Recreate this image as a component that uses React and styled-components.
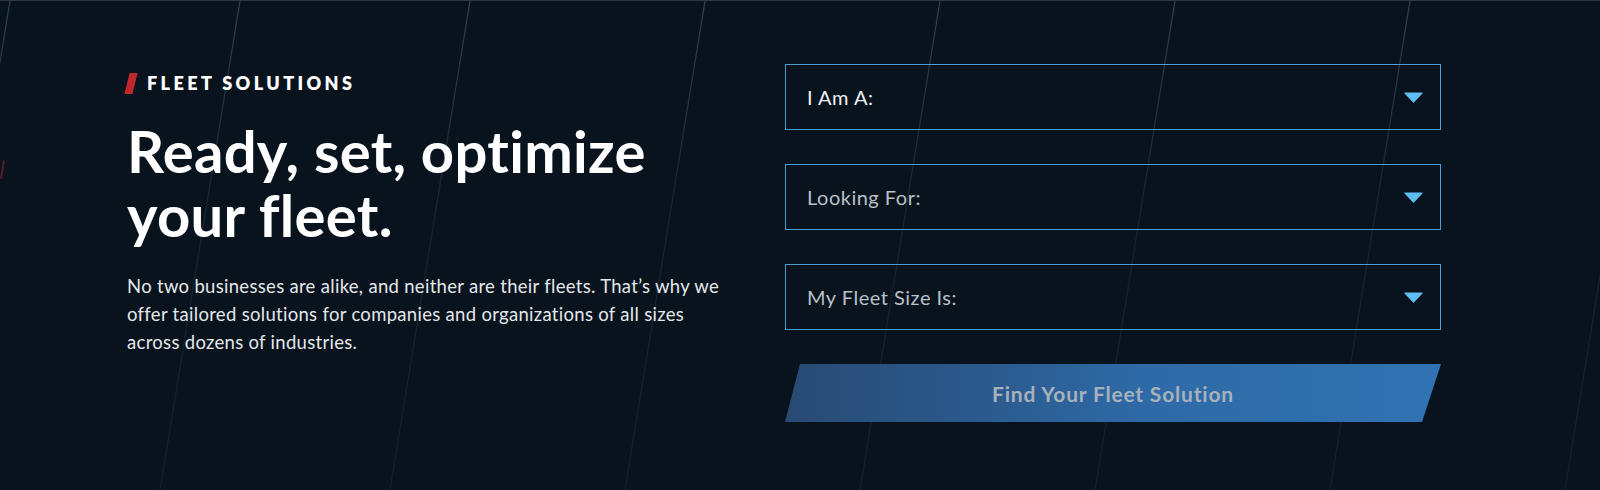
import React from "react";
import styled, { createGlobalStyle } from "styled-components";

const GlobalStyle = createGlobalStyle`
  html, body {
    margin: 0;
    padding: 0;
    background: #08131e;
  }
  body {
    font-family: "Lato", "Open Sans", sans-serif;
  }
`;

// faint slanted lines in the background
const LINES = [10, 240, 470, 705, 940, 1175, 1410, 1645];

const Backdrop = () => (
  <BackSvg viewBox="0 0 1600 490" preserveAspectRatio="none">
    <defs>
      <linearGradient id="ln" x1="0" y1="0" x2="0" y2="1">
        <stop offset="0" stopColor="#394a5a" stopOpacity="0.85" />
        <stop offset="0.45" stopColor="#2a3a4a" stopOpacity="0.45" />
        <stop offset="1" stopColor="#2a3a4a" stopOpacity="0.3" />
      </linearGradient>
    </defs>
    {LINES.map((x) => (
      <line key={x} x1={x} y1="0" x2={x - 80} y2="490" stroke="url(#ln)" strokeWidth="1.2" />
    ))}
    <line x1="4" y1="160" x2="1" y2="178" stroke="#7a2530" strokeWidth="2" opacity="0.7" />
  </BackSvg>
);

const Caret = () => (
  <svg width="19" height="11" viewBox="0 0 19 11">
    <path d="M1 1 H18 L9.5 10 Z" fill="#5ebef2" stroke="#5ebef2" strokeWidth="1.2" strokeLinejoin="round" />
  </svg>
);

const App = () => {
  return (
    <>
      <GlobalStyle />
      <Section>
        <Backdrop />
        <Inner>
          <Intro>
            <Eyebrow>
              <Slash />
              FLEET SOLUTIONS
            </Eyebrow>
            <Title>
              Ready, set, optimize
              <br />
              your fleet.
            </Title>
            <Lead>
              No two businesses are alike, and neither are their fleets. That’s why we offer tailored
              solutions for companies and organizations of all sizes across dozens of industries.
            </Lead>
          </Intro>
          <Form>
            <Select $active>
              I Am A:
              <Caret />
            </Select>
            <Select>
              Looking For:
              <Caret />
            </Select>
            <Select>
              My Fleet Size Is:
              <Caret />
            </Select>
            <Submit>Find Your Fleet Solution</Submit>
          </Form>
        </Inner>
      </Section>
    </>
  );
};

//Styles
const Section = styled.section`
  position: relative;
  height: 490px;
  box-sizing: border-box;
  border-top: 1px solid #2c3742;
  background: #08131e;
  overflow: hidden;
`;

const BackSvg = styled.svg`
  position: absolute;
  inset: 0;
  width: 100%;
  height: 100%;
  pointer-events: none;
`;

const Inner = styled.div`
  position: relative;
  display: grid;
  grid-template-columns: 600px 656px;
  column-gap: 58px;
  padding: 63px 0 0 127px;
`;

const Intro = styled.div`
  display: flex;
  flex-direction: column;
  padding-top: 8px;
`;

const Eyebrow = styled.div`
  display: flex;
  align-items: center;
  gap: 12px;
  color: #ffffff;
  font-size: 18px;
  font-weight: 800;
  letter-spacing: 3.4px;
  line-height: 22px;
`;

const Slash = styled.span`
  width: 8px;
  height: 21px;
  background: #c0272d;
  transform: skewX(-14deg);
`;

const Title = styled.h1`
  margin: 25px 0 0;
  color: #ffffff;
  font-size: 58px;
  font-weight: 700;
  line-height: 64px;
  letter-spacing: 0.3px;
`;

const Lead = styled.p`
  margin: 25px 0 0;
  color: #e4e7ea;
  font-size: 18.5px;
  line-height: 28px;
  letter-spacing: 0.3px;
  width: 600px;
`;

const Form = styled.div`
  display: flex;
  flex-direction: column;
  gap: 34px;
`;

const Select = styled.div`
  display: flex;
  align-items: center;
  justify-content: space-between;
  box-sizing: border-box;
  height: 66px;
  padding: 0 17px 0 21px;
  border: 1.5px solid #4a9fd2;
  color: ${(p) => (p.$active ? "#eef1f4" : "#b9c0c7")};
  font-size: 20px;
  letter-spacing: 0.5px;
  cursor: pointer;
`;

const Submit = styled.button`
  height: 58px;
  border: 0;
  padding: 0;
  clip-path: polygon(15px 0, 100% 0, calc(100% - 19px) 100%, 0 100%);
  background: linear-gradient(90deg, #284a73 0%, #2b5a8d 30%, #2e6aa7 55%, #3072b2 100%);
  color: #a6b1bb;
  font-family: inherit;
  font-size: 21px;
  font-weight: 700;
  letter-spacing: 0.8px;
  cursor: pointer;
`;

export default App;
